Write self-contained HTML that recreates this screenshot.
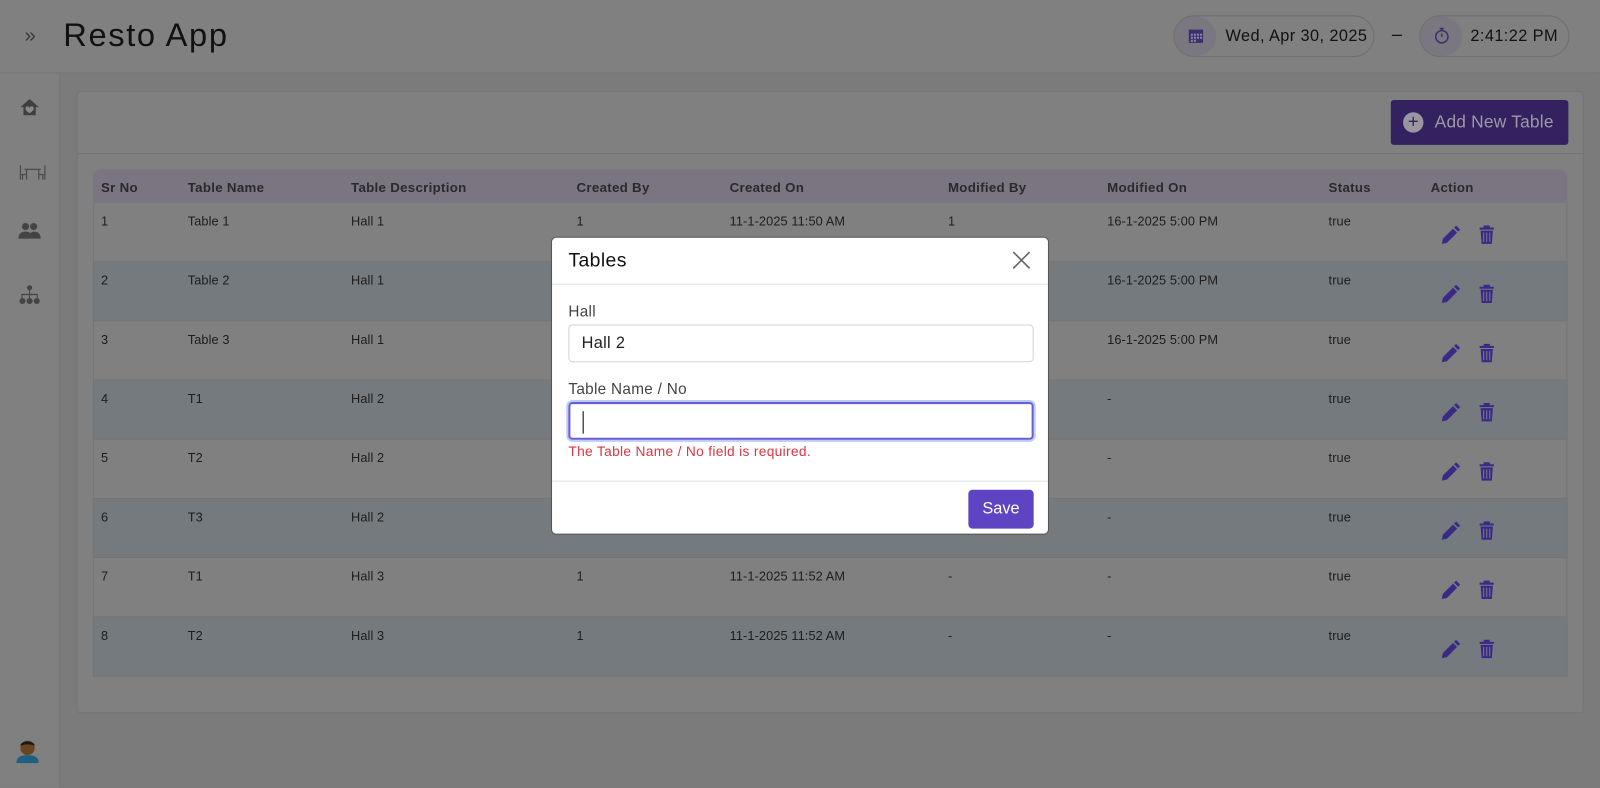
<!DOCTYPE html>
<html><head><meta charset="utf-8"><style>
*{box-sizing:border-box;margin:0;padding:0}
body{width:1600px;height:772px;overflow:hidden;background:#7b7b7b;font-family:"Liberation Sans",sans-serif;position:relative;color:#111}
#w{position:absolute;left:0;top:0;width:1568px;height:757px;transform:scale(1.0204);transform-origin:0 0}
.top{position:absolute;left:0;top:0;width:1568px;height:72px;background:#808080;border-bottom:1px solid #747474}
.side{position:absolute;left:0;top:72px;width:59px;height:700px;background:#808080;border-right:1px solid #747474}
.card{position:absolute;left:75px;top:89px;width:1477px;height:610px;background:#808080;border:1px solid #747474;border-radius:4px}
.ch{position:absolute;left:0;top:60px;width:100%;border-top:1px solid #747474}
.btn{position:absolute;left:1287px;top:8px;width:174px;height:44px;background:#33225f;border-radius:3px;color:#9d99a6;font-size:17px;line-height:44px;padding-left:43px;letter-spacing:.2px}
.btn i{position:absolute;left:12px;top:12px;width:20px;height:20px;border-radius:50%;background:#9a97a0;font-style:normal;color:#33225f;line-height:19px;text-align:center;font-size:18px;padding:0;letter-spacing:0}
.tbl{position:absolute;left:91px;top:166px;width:1445px}
.hr{height:33px;background:#7a7580;border-radius:8px 8px 0 0;position:relative;font-weight:bold;font-size:13px;color:#2a2a2a;letter-spacing:.3px}
.r{height:58px;position:relative;font-size:12.5px;color:#1d1d1d;border:1px solid #747474;border-top:none;letter-spacing:.1px}
.r.e{background:#757a7e}.r.o{background:#808080}
.c{position:absolute;top:11px}
.hr .c{top:10px}
.ic{position:absolute;left:1318px;top:21px;width:60px;height:20px}
.pill{position:absolute;top:15px;height:41px;border:1px solid #6e6e6e;border-radius:21px;background:#808080;font-size:16px;line-height:39px;color:#111;letter-spacing:.4px}
.pill .circ{position:absolute;left:0;top:0;width:41px;height:39px;border-radius:50%;background:#7a7780}
.modal{position:absolute;left:540px;top:232px;width:488px;height:292px;background:#fff;border-radius:5px;border:1px solid #555}
.mh{height:46px;border-bottom:1px solid #dee2e6;font-size:19px;padding:12px 16px;color:#111;letter-spacing:.4px}
.lbl{position:absolute;left:16px;font-size:15px;color:#444;letter-spacing:.3px}
.inp{position:absolute;left:16px;width:456px;height:37px;border:1px solid #ced4da;border-radius:4px;font-size:16px;padding:9px 12px;color:#222;letter-spacing:.3px}
</style></head><body><div id="w">
<div class="top">
<div style="position:absolute;left:24px;top:24px;font-size:20px;color:#3a3a3a">»</div>
<div style="position:absolute;left:62px;top:16px;font-size:32px;color:#111;letter-spacing:1.6px">Resto App</div>
<div class="pill" style="left:1150px;width:197px"><div class="circ"></div>
<svg style="position:absolute;left:13px;top:11px" width="16" height="16" viewBox="0 0 16 16"><rect x="1" y="2" width="14" height="13" fill="#3b2f6e"/><g fill="#8a86a0"><rect x="3" y="6" width="2" height="2"/><rect x="6" y="6" width="2" height="2"/><rect x="9" y="6" width="2" height="2"/><rect x="12" y="6" width="2" height="2"/><rect x="3" y="9" width="2" height="2"/><rect x="6" y="9" width="2" height="2"/><rect x="9" y="9" width="2" height="2"/><rect x="12" y="9" width="2" height="2"/><rect x="3" y="12" width="2" height="2"/><rect x="6" y="12" width="2" height="2"/></g></svg>
<span style="position:absolute;left:50px">Wed, Apr 30, 2025</span></div>
<div style="position:absolute;left:1364px;top:23px;font-size:18px">–</div>
<div class="pill" style="left:1391px;width:147px"><div class="circ"></div>
<svg style="position:absolute;left:12px;top:10px" width="18" height="18" viewBox="0 0 18 18" fill="none" stroke="#3b2f6e" stroke-width="1.5"><circle cx="9" cy="10" r="6"/><path d="M9 10V7M7 2h4M9 2v2"/></svg>
<span style="position:absolute;left:49px">2:41:22 PM</span></div>
</div>
<div class="side">
<svg style="position:absolute;left:19px;top:24px" width="20" height="18" viewBox="0 0 20 18"><path d="M10 1 1 9h3v8h12V9h3z" fill="#3f3f3f"/><path d="M10 15c-3-2-4-3-4-4.5a2 2 0 0 1 4-.5 2 2 0 0 1 4 .5c0 1.5-1 2.5-4 4.5z" fill="#8a8a8a"/></svg>
<svg style="position:absolute;left:18px;top:88px" width="28" height="18" viewBox="0 0 28 18" fill="none" stroke="#4a4a4a" stroke-width="1.2"><path d="M2 2v14M26 2v14M6 6h16M8 6v10M20 6v10M3 11h5M20 11h5M4 11v5M24 11v5"/></svg>
<svg style="position:absolute;left:18px;top:146px" width="22" height="16" viewBox="0 0 22 16" fill="#444"><circle cx="7" cy="4" r="3.5"/><circle cx="15" cy="4" r="3.5"/><path d="M0 16c0-5 3-7 7-7s7 2 7 7zM10 16c0-3 2-7 5-7 4 0 7 2 7 7z"/></svg>
<svg style="position:absolute;left:18px;top:207px" width="22" height="20" viewBox="0 0 22 20" fill="#444"><circle cx="11" cy="3" r="2.5"/><path d="M10.5 5h1v4h-1zM3 9h16v1.2H3zM3 9h1v4H3zM18 9h1v4h-1zM10.5 9h1v4h-1z"/><circle cx="4" cy="16" r="3"/><circle cx="11" cy="16" r="3"/><circle cx="18" cy="16" r="3"/></svg>
<svg style="position:absolute;left:16px;top:650px" width="22" height="26" viewBox="0 0 22 26"><path d="M0 26c0-6 4-8 11-8s11 2 11 8z" fill="#1f5f80"/><circle cx="11" cy="11" r="7" fill="#6a4620"/><path d="M4 9c0-6 14-6 14 0-3-2-11-2-14 0z" fill="#1a1a1a"/></svg>
</div>
<div class="card"><div class="ch"></div>
<div class="btn"><i>+</i>Add New Table</div></div>
<div class="tbl">
<div class="hr"><span class="c" style="left:8px">Sr No</span><span class="c" style="left:93px">Table Name</span><span class="c" style="left:253px">Table Description</span><span class="c" style="left:474px">Created By</span><span class="c" style="left:624px">Created On</span><span class="c" style="left:838px">Modified By</span><span class="c" style="left:994px">Modified On</span><span class="c" style="left:1211px">Status</span><span class="c" style="left:1311px">Action</span></div>
<div id="rows"></div>
</div>
<div class="modal">
<div class="mh">Tables</div>
<svg style="position:absolute;left:451px;top:13px" width="18" height="18" viewBox="0 0 18 18" stroke="#666" stroke-width="1.6"><path d="M1 1l16 16M17 1 1 17"/></svg>
<div class="lbl" style="top:64px">Hall</div>
<div class="inp" style="top:85px">Hall 2</div>
<div class="lbl" style="top:140px">Table Name / No</div>
<div class="inp" style="top:161px;border:2px solid #6c5ad8;box-shadow:0 0 0 2px #b9cdf5"><span style="display:inline-block;width:1px;height:22px;background:#000;margin-top:-2px"></span></div>
<div style="position:absolute;left:16px;top:202px;font-size:13.5px;color:#dc3545;letter-spacing:.3px">The Table Name / No field is required.</div>
<div style="position:absolute;left:0;top:238px;width:100%;border-top:1px solid #dee2e6"></div>
<div style="position:absolute;left:408px;top:247px;width:64px;height:38px;background:#5e44c2;border-radius:4px;color:#fff;font-size:16px;line-height:38px;text-align:center">Save</div>
</div>
</div>
<script>
var d=[["1","Table 1","Hall 1","1","11-1-2025 11:50 AM","1","16-1-2025 5:00 PM"],["2","Table 2","Hall 1","1","11-1-2025 11:50 AM","1","16-1-2025 5:00 PM"],["3","Table 3","Hall 1","1","11-1-2025 11:50 AM","1","16-1-2025 5:00 PM"],["4","T1","Hall 2","1","11-1-2025 11:51 AM","-","-"],["5","T2","Hall 2","1","11-1-2025 11:51 AM","-","-"],["6","T3","Hall 2","1","11-1-2025 11:51 AM","-","-"],["7","T1","Hall 3","1","11-1-2025 11:52 AM","-","-"],["8","T2","Hall 3","1","11-1-2025 11:52 AM","-","-"]];
var L=[8,93,253,474,624,838,994],h="";
var icons='<svg class="ic" viewBox="0 0 60 20"><path d="M3 19l1-5L14 4l4 4L8 18zM15 3l2-2 4 4-2 2z" fill="#3b2a85"/><path d="M40 3h14v2H40zM44 1h6v2h-6zM41 6h12l-1 13H42z" fill="#3b2a85"/><path d="M44 8v9M47 8v9M50 8v9" stroke="#7a7a86" stroke-width="1"/></svg>';
d.forEach(function(r,i){h+='<div class="r '+(i%2?'e':'o')+'">';r.forEach(function(v,j){h+='<span class="c" style="left:'+(L[j]-1)+'px">'+v+'</span>'});h+='<span class="c" style="left:1210px">true</span>'+icons+'</div>'});
document.getElementById('rows').innerHTML=h;
</script>
</body></html>
